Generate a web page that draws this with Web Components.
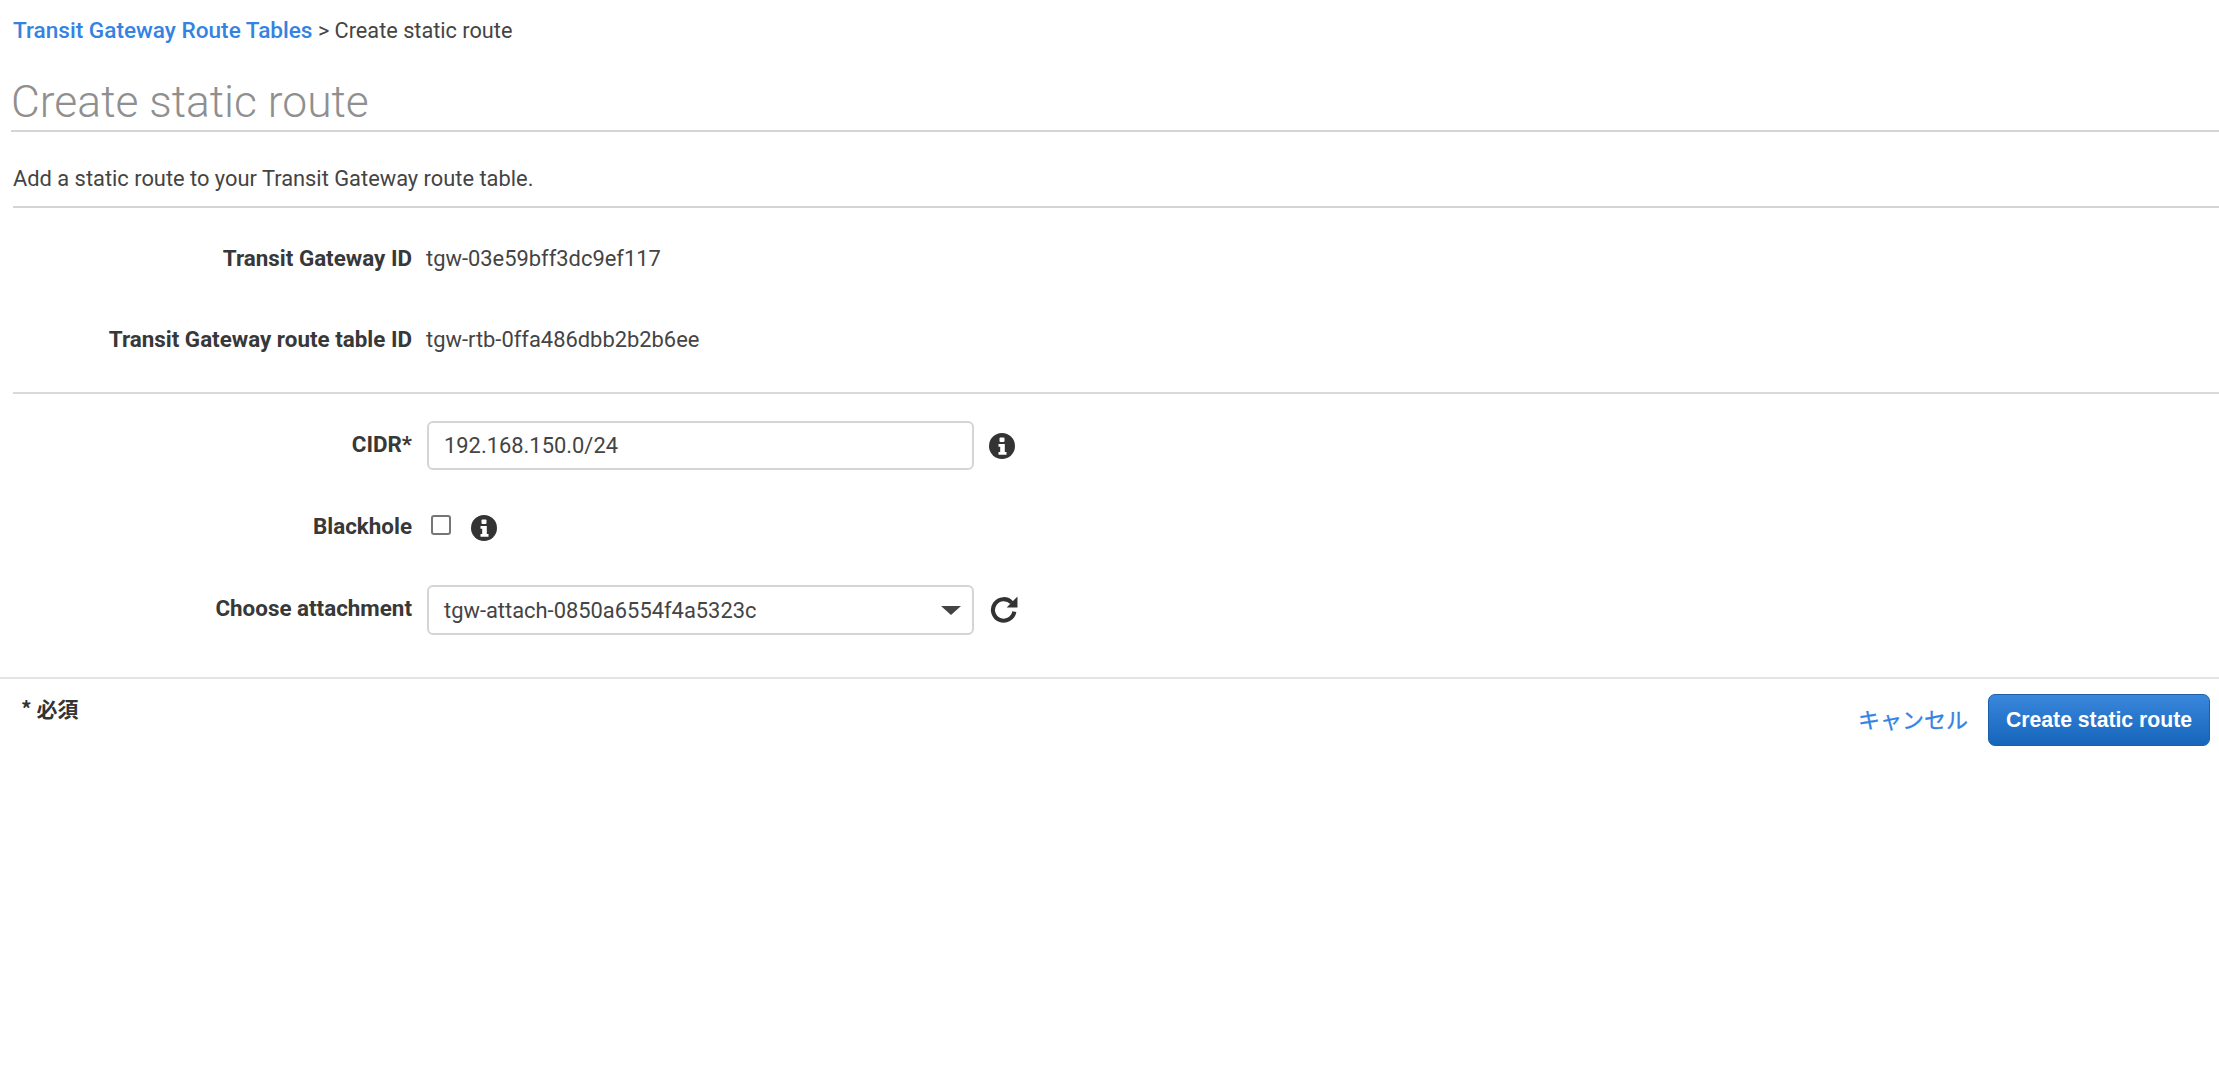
<!DOCTYPE html>
<html><head><meta charset="utf-8"><title>Create static route</title>
<style>
html,body{margin:0;padding:0;background:#fff}
body{font-family:Roboto,"Noto Sans CJK JP",sans-serif;font-size:22px;color:#444;height:1086px;overflow:hidden}
</style></head><body>
<route-page>
  <page-header slot="header" crumb="Transit Gateway Route Tables" current="Create static route" title="Create static route" desc="Add a static route to your Transit Gateway route table."></page-header>
  <detail-section>
    <form-row label="Transit Gateway ID" h="48"><span>tgw-03e59bff3dc9ef117</span></form-row>
    <form-row label="Transit Gateway route table ID" h="48"><span>tgw-rtb-0ffa486dbb2b2b6ee</span></form-row>
  </detail-section>
  <edit-section>
    <form-row label="CIDR*" h="49"><text-box value="192.168.150.0/24"></text-box><app-icon name="info"></app-icon></form-row>
    <form-row label="Blackhole" h="35"><check-box></check-box><app-icon name="info"></app-icon></form-row>
    <form-row label="Choose attachment" h="50"><select-box value="tgw-attach-0850a6554f4a5323c"></select-box><app-icon name="refresh"></app-icon></form-row>
  </edit-section>
  <page-footer></page-footer>
</route-page>
<script>
function def(name, css, html, init){
  customElements.define(name, class extends HTMLElement{
    connectedCallback(){
      if(this.shadowRoot) return;
      const r=this.attachShadow({mode:'open'});
      const get=k=>this.getAttribute(k)||'';
      r.innerHTML='<style>'+css+'</style>'+(typeof html==='function'?html(get):html);
      if(init) init(this,r);
    }
  });
}
def('route-page',':host{display:block;width:2219px}','<slot name="header"></slot><slot></slot>');
def('page-header',`
:host{display:block;padding:19px 0 0 13px}
a{color:#3483e2;font-weight:500;text-decoration:none;font-size:22.6px}
.crumb{font-size:21.7px;line-height:24px;color:#444;height:24px;white-space:nowrap}
h1{margin:31px 0 0 -2px;font-size:44.4px;line-height:56px;height:56px;font-weight:300;color:#8f8f8f;border-bottom:2px solid #d5d5d5}
p{margin:0;padding:35px 0 16px;font-size:21.85px;line-height:23px;color:#444;border-bottom:2px solid #d5d5d5}
`,g=>`<div class="crumb"><a href="#">${g('crumb')}</a> &gt; ${g('current')}</div><h1>${g('title')}</h1><p>${g('desc')}</p>`);
def('detail-section',':host{display:block;margin-left:13px;height:184px;border-bottom:2px solid #d9d9d9}.w{margin-left:-13px;display:flex;flex-direction:column;gap:33px;padding-top:26px;--value-shift:-1px}','<div class="w"><slot></slot></div>');
def('edit-section',':host{display:block;height:283px;border-bottom:2px solid #e4e4e4;--label-shift:-2px}.w{display:flex;flex-direction:column;gap:40px;padding-top:27px}','<div class="w"><slot></slot></div>');
def('form-row',`
:host{display:flex;align-items:center;font-size:21.9px;color:#444}
label{width:412px;text-align:right;font-weight:700;color:#383838;flex:none;white-space:nowrap;font-size:22.4px;position:relative;top:var(--label-shift,0)}
.c{margin-left:calc(15px + var(--value-shift,0px));display:flex;align-items:center;gap:15px}
`,g=>`<label>${g('label')}</label><div class="c"><slot></slot></div>`,(el)=>{el.style.height=el.getAttribute('h')+'px';});
def('text-box',`
:host{display:block}
input{display:block;box-sizing:border-box;width:547px;height:49px;border:2px solid #d5d5d5;border-radius:6px;padding:0 15px;font:21.9px Roboto,sans-serif;color:#444;background:#fff;outline:0}
`,g=>`<input type="text" value="${g('value')}">`);
def('select-box',`
:host{display:block}
.s{box-sizing:border-box;width:547px;height:50px;border:2px solid #d5d5d5;border-radius:6px;padding:0 15px;font-size:21.9px;color:#444;background:#fff;display:flex;align-items:center;justify-content:space-between}
i{width:0;height:0;border-left:10px solid transparent;border-right:10px solid transparent;border-top:9px solid #444;margin-right:-4px}
`,g=>`<div class="s"><span>${g('value')}</span><i></i></div>`);
def('check-box',`
:host{display:block;margin:-5px 5px 0 4px}
b{display:block;box-sizing:border-box;width:20px;height:20px;border:2px solid #767676;border-radius:3px;background:#fff}
`,'<b></b>');
def('app-icon',`
:host{display:block;color:#333}
svg{display:block}
.refresh{margin:-2px 0 0 1px}
`,'',(el,r)=>{
  const n=el.getAttribute('name');
  const p=n==='info'
   ?'<svg width="26" height="26" viewBox="0 0 26 26"><circle cx="13" cy="13" r="13" fill="currentColor"/><rect x="10.5" y="4.5" width="5" height="4.5" rx="1" fill="#fff"/><path d="M9.5 11h6.3v8h1.7v2.8h-8V19h1.7v-5.2H9.5z" fill="#fff"/></svg>'
   :'<svg class="refresh" width="28" height="28" viewBox="0 0 26 26"><path d="M20.2 7.2A10 10 0 1 0 22.6 15.5" fill="none" stroke="currentColor" stroke-width="3.8"/><path d="M25.5 1.5V11.5H15.5z" fill="currentColor"/></svg>';
  r.innerHTML+=p;
});
def('page-footer',`
:host{display:flex;justify-content:space-between;align-items:flex-start;padding:0 9px 0 21px}
.r{font-weight:700;font-size:21px;color:#333;margin-top:16px;font-family:"Noto Sans CJK JP",Roboto,sans-serif;line-height:26px}
.a{display:flex;align-items:flex-start;gap:20px;margin-top:15px}
a{color:#3483e2;font-size:22px;text-decoration:none;font-family:"Noto Sans CJK JP",sans-serif;line-height:30px;margin-top:9px;-webkit-text-stroke:.3px #3483e2}
button{box-sizing:border-box;width:222px;height:52px;border:1px solid #1a5fa8;border-radius:7px;background:linear-gradient(#3a87dc,#1565bb);color:#fff;font:700 21.2px "Liberation Sans",Arial,sans-serif;padding:0}
`,'<span class="r">* 必須</span><div class="a"><a href="#">キャンセル</a><button>Create static route</button></div>');
</script>
</body></html>
